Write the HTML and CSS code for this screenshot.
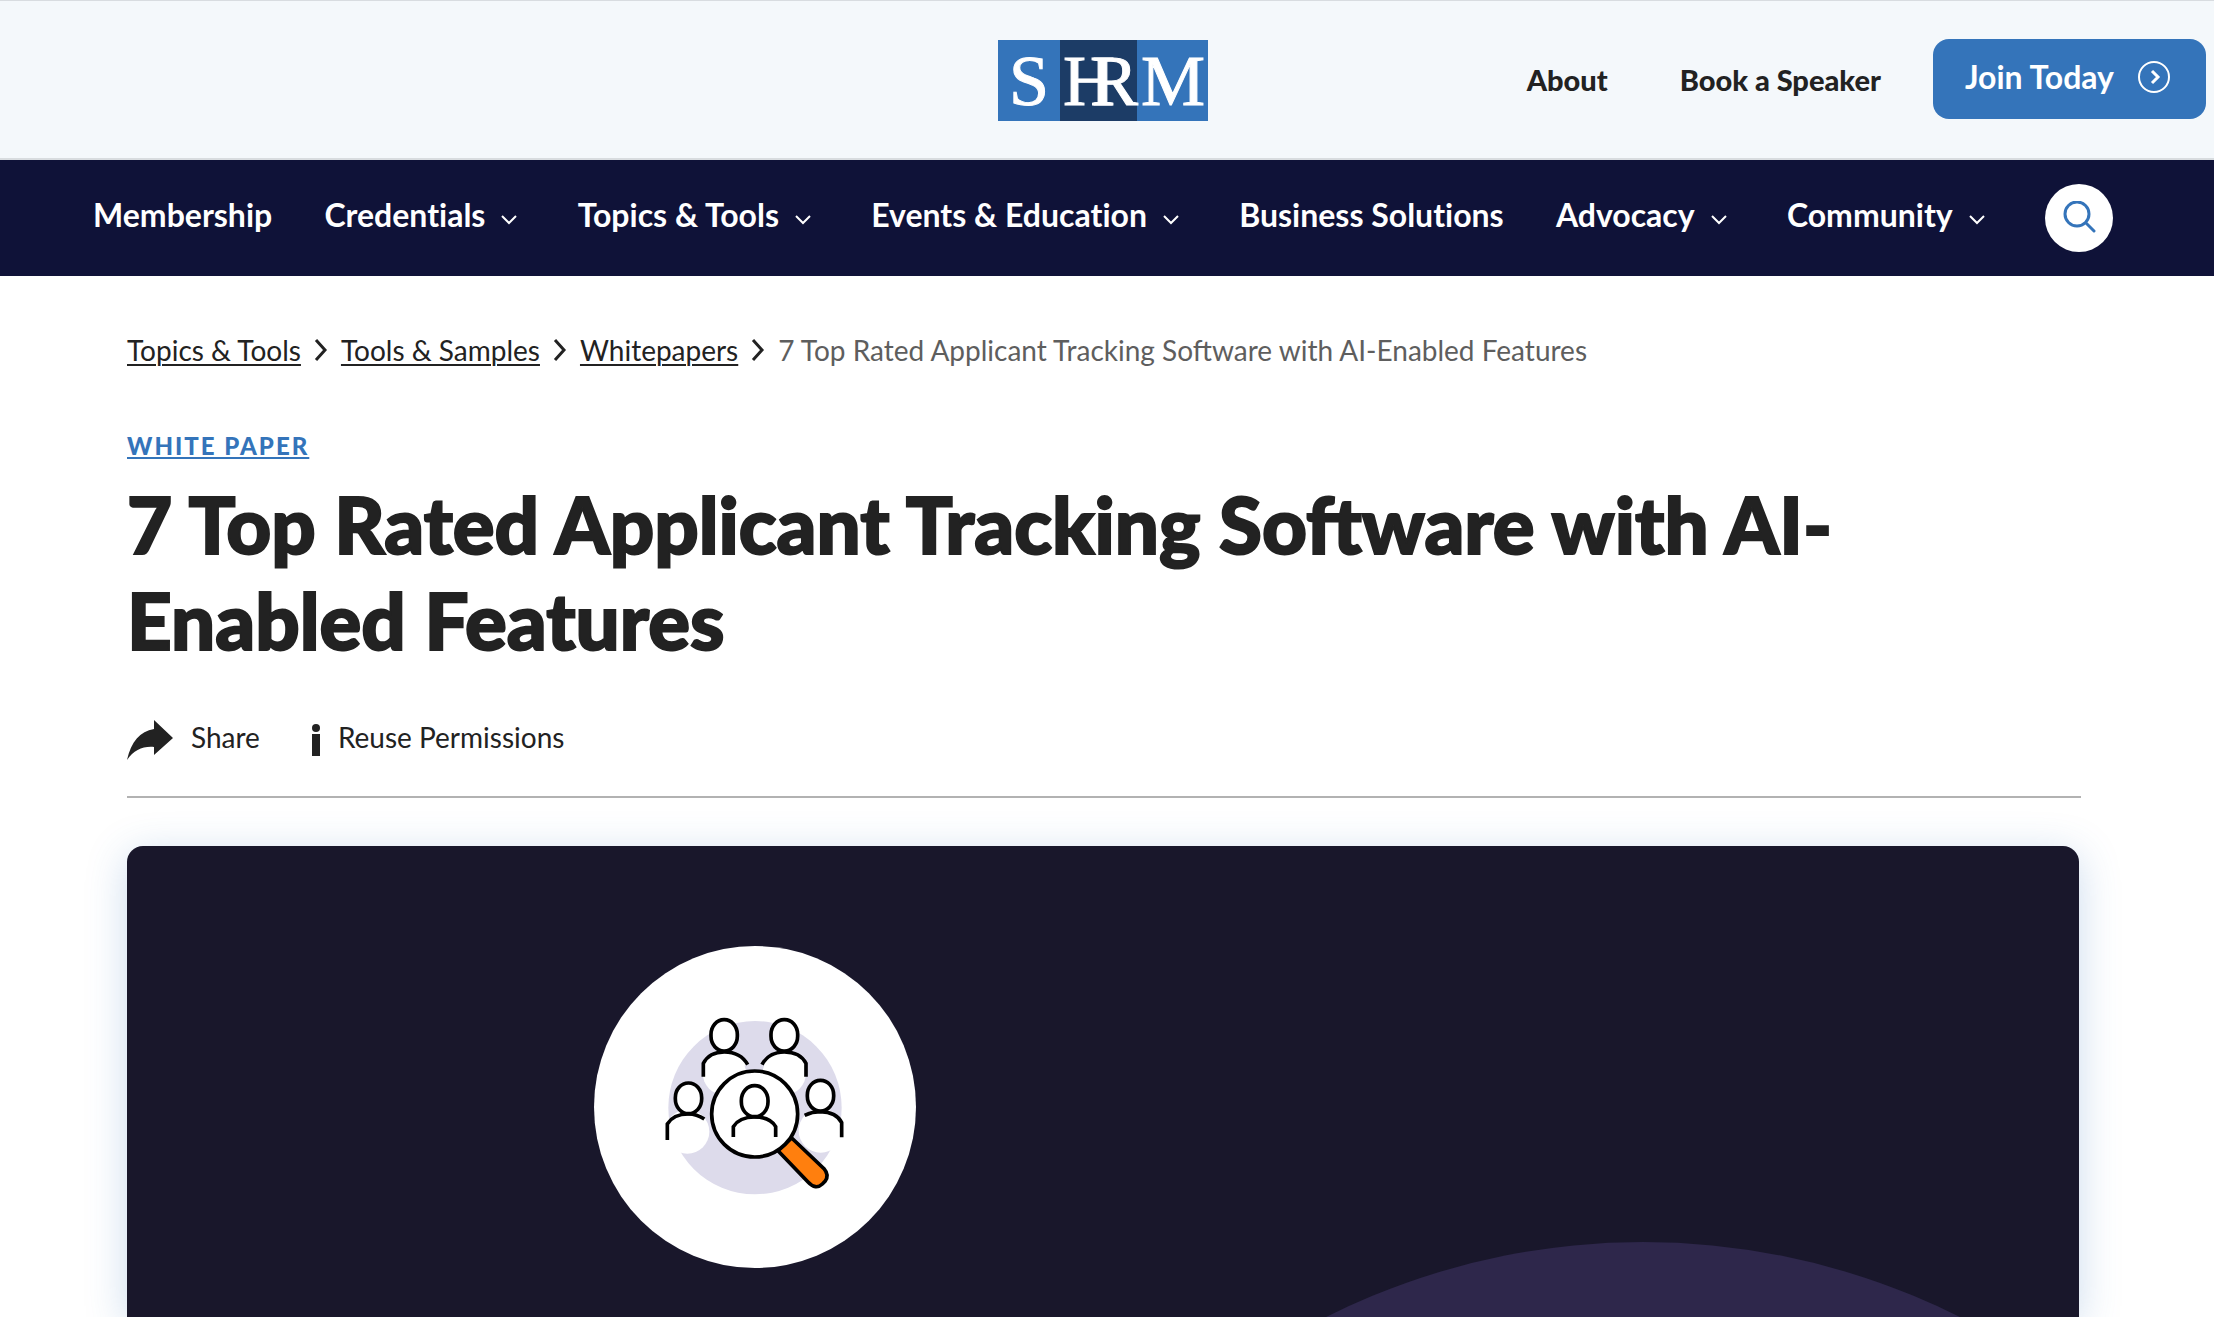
FILE: index.html
```html
<!DOCTYPE html>
<html lang="en">
<head>
  <meta charset="UTF-8" />
  <meta name="viewport" content="width=device-width, initial-scale=1.0"/>
  <title>7 Top Rated Applicant Tracking Software with AI-Enabled Features</title>
  <link rel="stylesheet" href="styles.css">
</head>
<body>

  <header class="top-bar">
    <a class="logo" href="#" aria-label="SHRM">
      <svg viewBox="0 0 210 81" width="210" height="81">
        <rect width="62" height="81" fill="#3474ba"/>
        <rect x="62" width="77" height="81" fill="#1c3c66"/>
        <rect x="139" width="71" height="81" fill="#3474ba"/>
        <text class="logo-letter" x="11" y="65">S</text>
        <text class="logo-letter" x="65" y="65">H</text>
        <text class="logo-letter" x="92" y="65">R</text>
        <text class="logo-letter" x="143" y="65">M</text>
      </svg>
    </a>
    <div class="top-links">
      <a href="#">About</a>
      <a href="#">Book a Speaker</a>
      <a class="join" href="#">Join Today
        <svg viewBox="0 0 32 32" width="32" height="32" fill="none" stroke="#fff" stroke-width="2">
          <circle cx="16" cy="16" r="15"/>
          <path d="M14 10l6 6-6 6" stroke-width="3"/>
        </svg>
      </a>
    </div>
  </header>

  <nav class="main-nav">
    <a href="#">Membership</a>
    <button type="button">Credentials <svg class="chevron" viewBox="0 0 16 10"><path d="M1 1l7 7 7-7"/></svg></button>
    <button type="button">Topics &amp; Tools <svg class="chevron" viewBox="0 0 16 10"><path d="M1 1l7 7 7-7"/></svg></button>
    <button type="button">Events &amp; Education <svg class="chevron" viewBox="0 0 16 10"><path d="M1 1l7 7 7-7"/></svg></button>
    <a href="#">Business Solutions</a>
    <button type="button">Advocacy <svg class="chevron" viewBox="0 0 16 10"><path d="M1 1l7 7 7-7"/></svg></button>
    <button type="button">Community <svg class="chevron" viewBox="0 0 16 10"><path d="M1 1l7 7 7-7"/></svg></button>
    <button type="button" class="search" aria-label="Search">
      <svg viewBox="0 0 34 34" width="34" height="34" fill="none" stroke="#3474ba" stroke-width="3" stroke-linecap="round">
        <circle cx="15" cy="13" r="12"/>
        <path d="M24 22l8 8"/>
      </svg>
    </button>
  </nav>

  <main class="page">
    <ol class="breadcrumb">
      <li><a href="#">Topics &amp; Tools</a><svg class="arrow" viewBox="0 0 14 22"><path d="M2 1l9 10-9 10"/></svg></li>
      <li><a href="#">Tools &amp; Samples</a><svg class="arrow" viewBox="0 0 14 22"><path d="M2 1l9 10-9 10"/></svg></li>
      <li><a href="#">Whitepapers</a><svg class="arrow" viewBox="0 0 14 22"><path d="M2 1l9 10-9 10"/></svg></li>
      <li class="current">7 Top Rated Applicant Tracking Software with AI-Enabled Features</li>
    </ol>

    <a class="category" href="#">WHITE PAPER</a>
    <h1>7 Top Rated Applicant Tracking Software with AI-Enabled Features</h1>

    <div class="actions">
      <button type="button" class="share">
        <svg viewBox="0 0 46 40" width="46" height="40"><path d="M0 40C4 22 13 11 27 9V0l19 18-19 17v-8C16 26 7 30 0 40z" fill="#222"/></svg>
        Share
      </button>
      <a class="reuse" href="#">
        <svg viewBox="0 0 8 32" width="8" height="32" fill="#222"><circle cx="4" cy="4" r="4"/><rect y="10" width="8" height="22"/></svg>
        Reuse Permissions
      </a>
    </div>

    <div class="hero">
      <svg viewBox="0 0 1952 471">
        <circle cx="1516" cy="1103" r="707" fill="#2e274b"/>
        <circle cx="628" cy="261" r="161" fill="#fff"/>
        <!-- people and magnifier -->
        <svg x="453" y="84" width="360" height="360" viewBox="0 0 1080 1080" fill="none" stroke="#000" stroke-width="11">
          <circle cx="525" cy="533" r="260" fill="#dddbeb" stroke="none"/>
          <g fill="#fff" stroke="none">
            <circle cx="433" cy="430" r="65"/>
            <circle cx="613" cy="430" r="65"/>
            <circle cx="322" cy="605" r="66"/>
            <circle cx="722" cy="602" r="66"/>
          </g>
          <path d="M370 440V400Q388 366 433 366Q482 366 503 404" fill="#fff"/>
          <rect x="393" y="269" width="79" height="94" rx="39" ry="44" fill="#fff"/>
          <path d="M546 404Q566 366 613 366Q660 366 678 400V440" fill="#fff"/>
          <rect x="573" y="269" width="80" height="94" rx="39" ry="44" fill="#fff"/>
          <path d="M262 630V582Q280 552 325 552Q350 552 373 567" fill="#fff"/>
          <rect x="286" y="459" width="79" height="92" rx="39" ry="44" fill="#fff"/>
          <path d="M674 556Q697 545 721 545Q770 547 785 578V622" fill="#fff"/>
          <rect x="682" y="451" width="79" height="92" rx="39" ry="44" fill="#fff"/>
          <path d="M594 662l90 94q23 25 43 6l8-8q14-18-3-38l-97-92z" fill="#ff7f0e"/>
          <circle cx="524" cy="552" r="129" fill="#fff"/>
          <path d="M460 621V590Q478 561 523 561Q570 561 587 590V621"/>
          <rect x="484" y="467" width="80" height="93" rx="39" ry="44" fill="#fff"/>
        </svg>
      </svg>
    </div>
  </main>

</body>
</html>
```

FILE: styles.css
```css
* {
  box-sizing: border-box;
}
body {
  margin: 0;
  font-family: Lato, "Open Sans", sans-serif;
  font-size: 28px;
  color: #222;
  background-color: #fff;
}
a {
  color: inherit;
  text-decoration: none;
}
button {
  font: inherit;
  color: inherit;
  background: none;
  border: none;
  padding: 0;
  cursor: pointer;
}
svg {
  display: block;
  flex-shrink: 0;
}

/* top bar */
.top-bar {
  display: grid;
  grid-template-columns: 1fr auto 1fr;
  align-items: center;
  height: 160px;
  padding: 0 8px 0 0;
  background-color: #f4f8fb;
  border-top: 1px solid #d8dce0;
  border-bottom: 2px solid #d8dcdf;
}
.logo {
  grid-column: 2;
  padding-top: 2px;
}
.logo-letter {
  font-family: "Liberation Serif", serif;
  font-size: 72px;
  fill: #fff;
  stroke: #fff;
  stroke-width: 1px;
}
.top-links {
  display: flex;
  justify-content: flex-end;
  align-items: center;
  gap: 72px;
  font-size: 29px;
  font-weight: 900;
}
.join {
  display: flex;
  align-items: center;
  gap: 24px;
  height: 80px;
  margin: -2px 0 0 -20px;
  padding: 0 36px 4px 32px;
  border-radius: 16px;
  background-color: #3474ba;
  color: #fff;
  font-size: 32px;
  font-weight: 700;
}

/* navigation */
.main-nav {
  display: flex;
  justify-content: space-between;
  align-items: center;
  height: 116px;
  padding: 0 101px 0 93px;
  background-color: #0f1238;
  color: #fff;
  font-size: 32px;
  font-weight: 700;
  font-variant-ligatures: none;
}
.main-nav a,
.main-nav button {
  display: flex;
  align-items: center;
  gap: 16px;
  padding-bottom: 8px;
}
.main-nav .chevron {
  width: 16px;
  height: 10px;
  margin: 12px 8px 0 0;
  fill: none;
  stroke: #fff;
  stroke-width: 2;
}
.main-nav .search {
  justify-content: center;
  width: 68px;
  height: 68px;
  padding: 0;
  border-radius: 50%;
  background-color: #fff;
}

/* article */
.page {
  padding: 54px 133px 0 127px;
}
.breadcrumb {
  display: flex;
  margin: 0;
  padding: 0;
  list-style: none;
  line-height: 40px;
}
.breadcrumb li {
  display: flex;
  align-items: center;
}
.breadcrumb a {
  text-decoration: underline;
  text-decoration-thickness: 2px;
  text-underline-offset: 3px;
}
.arrow {
  width: 14px;
  height: 22px;
  margin: 0 13px;
  fill: none;
  stroke: #222;
  stroke-width: 3;
}
.current {
  color: #5e5e5e;
}
.category {
  display: inline-block;
  margin-top: 60px;
  color: #3474ba;
  font-size: 24px;
  font-weight: 900;
  line-height: 32px;
  letter-spacing: 2px;
  text-decoration: underline;
  text-decoration-thickness: 2px;
  text-underline-offset: 2px;
}
h1 {
  margin: 14px 0 0;
  font-size: 78px;
  font-weight: 900;
  line-height: 96px;
  -webkit-text-stroke: 2px #222;
}
.actions {
  display: flex;
  gap: 52px;
  height: 120px;
  margin-top: 10px;
  border-bottom: 2px solid #b2b2b2;
}
.share,
.reuse {
  display: flex;
  align-items: center;
  gap: 18px;
}
.share svg,
.reuse svg {
  margin-top: 6px;
}
.hero {
  margin: 48px 2px 0 0;
  border-radius: 16px 16px 0 0;
  background-color: #19172b;
  box-shadow: 0 8px 40px rgba(52, 116, 186, 0.25);
}
```
